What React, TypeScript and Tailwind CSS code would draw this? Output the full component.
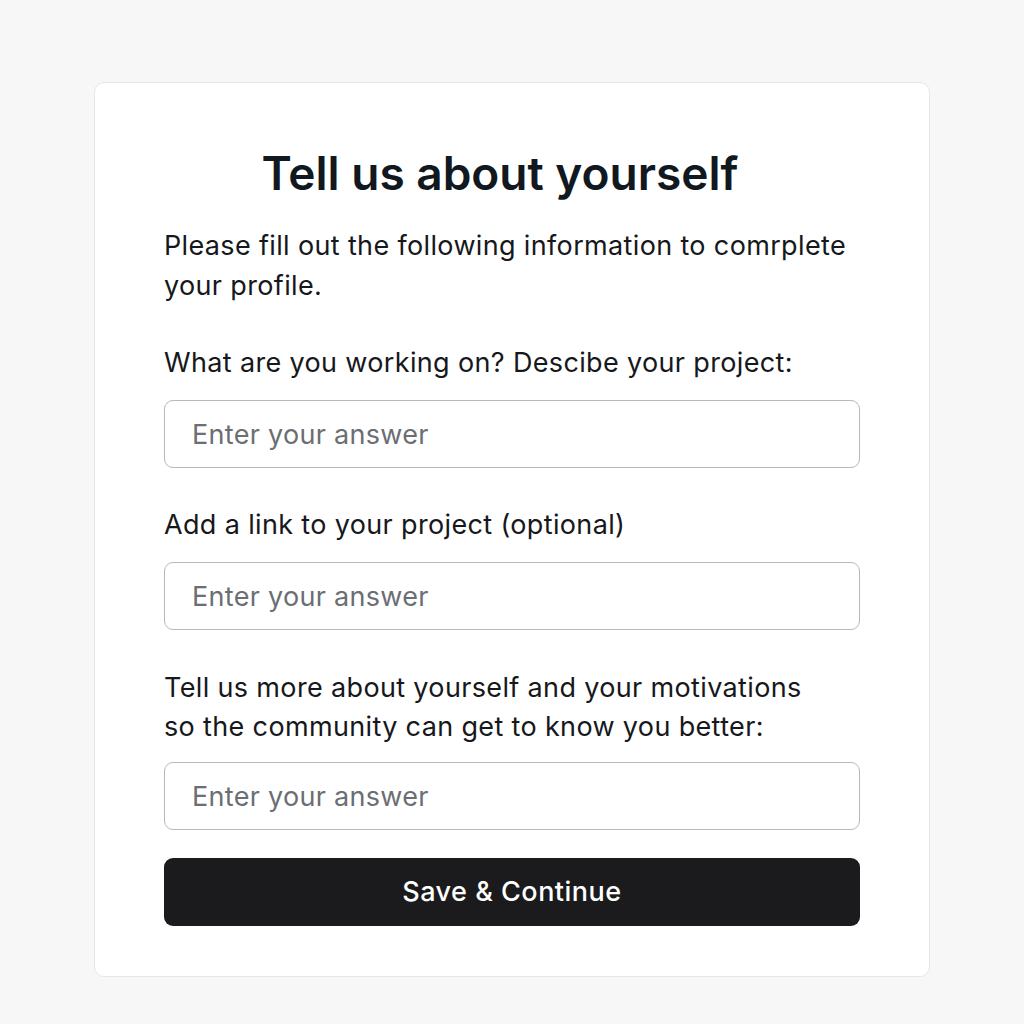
import React from 'react';

const fields = [
  { label: ['What are you working on? Descibe your project:'], mt: 'mt-[37px]', gap: 'mt-[18px]' },
  { label: ['Add a link to your project (optional)'], mt: 'mt-[37px]', gap: 'mt-[18px]' },
  {
    label: ['Tell us more about yourself and your motivations', 'so the community can get to know you better:'],
    mt: 'mt-[38px]',
    gap: 'mt-[16px]',
  },
];

const App: React.FC = () => {
  return (
    <div className="min-h-screen w-full bg-[#f7f7f8] pt-[82px] font-['Inter','Liberation_Sans',sans-serif]">
      <div className="ml-[94px] w-[836px] rounded-[10px] border border-[#e6e6e8] bg-white px-[69px] pt-[62px] pb-[50px]">
        <h1 className="pr-[24px] text-center text-[46px] font-semibold leading-[56px] tracking-[0px] text-[#111820]">
          Tell us about yourself
        </h1>
        <p className="mt-[25px] text-[27px] leading-[40px] tracking-[0.35px] text-[#16181c]">
          Please fill out the following information to comrplete your profile.
        </p>
        {fields.map((f, i) => (
          <div key={i} className={f.mt}>
            <label className="block text-[27px] leading-[39px] tracking-[0.35px] text-[#16181c]">
              {f.label.map((l, j) => (
                <span key={j} className="block">
                  {l}
                </span>
              ))}
            </label>
            <input
              type="text"
              placeholder="Enter your answer"
              className={`${f.gap} block h-[68px] w-full rounded-[9px] border border-[#b4b9bf] bg-white px-[27px] text-[27px] tracking-[0.3px] text-[#16181c] outline-none placeholder:text-[#6b6e73]`}
            />
          </div>
        ))}
        <button
          type="button"
          className="mt-[28px] flex h-[68px] w-full items-center justify-center rounded-[9px] bg-[#1b1b1d] text-[27px] font-medium tracking-[0.5px] text-white"
        >
          Save &amp; Continue
        </button>
      </div>
    </div>
  );
};

export default App;
